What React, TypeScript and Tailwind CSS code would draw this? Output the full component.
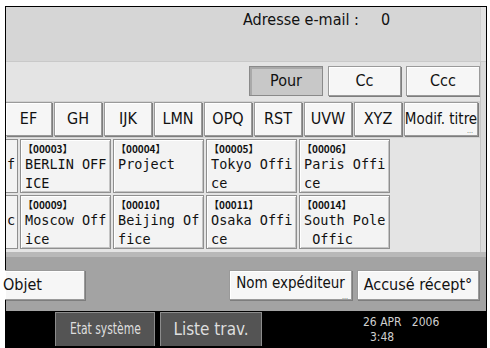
import React from "react";

const NARROW = "font-['Liberation_Sans_Narrow','DejaVu_Sans_Condensed',sans-serif]";
const MONO = "font-['DejaVu_Sans_Mono','Liberation_Mono',monospace]";

function WhiteBtn({ children, className = "" }: { children: React.ReactNode; className?: string }) {
  return (
    <div
      className={`flex items-center justify-center whitespace-nowrap bg-[#f6f6f6] border border-[#9a9a9a] shadow-[1px_1px_0_#7d7d7d,inset_1px_1px_0_#ffffff] text-[#111] ${className}`}
    >
      {children}
    </div>
  );
}

function Card({ id, l1, l2 }: { id: string; l1: string; l2: string }) {
  return (
    <div className="w-[91px] h-[54px] shrink-0 bg-[#f3f3f3] border border-[#8f8f8f] shadow-[inset_1px_1px_0_#ffffff,inset_-1px_-1px_0_#c4c4c4] px-[4px] pt-[3px] overflow-hidden">
      <div className="text-[10px] leading-[12px] font-bold text-[#111] font-['Noto_Sans_CJK_JP','DejaVu_Sans',sans-serif] whitespace-nowrap -ml-[2px]">
        【{id}】
      </div>
      <div className={`${MONO} text-[13.5px] leading-[19px] text-[#111] whitespace-pre`}>{l1}</div>
      <div className={`${MONO} text-[13.5px] leading-[19px] text-[#111] whitespace-pre`}>{l2}</div>
    </div>
  );
}

function PartialCard({ ch }: { ch: string }) {
  return (
    <div className="w-[12px] h-[54px] shrink-0 bg-[#f3f3f3] border border-l-0 border-[#8f8f8f] overflow-hidden pt-[15px]">
      <div className={`${MONO} text-[13.5px] leading-[19px] text-[#111] pl-[1px]`}>{ch}</div>
    </div>
  );
}

export default function App() {
  const letters = ["GH", "IJK", "LMN", "OPQ", "RST", "UVW", "XYZ"];
  return (
    <div className="w-[490px] h-[348px] bg-white pl-[5px] pt-[6px] overflow-hidden">
      <div className="w-[482px] h-[342px] border-l border-t border-r border-black flex flex-col bg-black">
        {/* header */}
        <div className="h-[54px] flex bg-[#d6d6d6] shrink-0">
          <div className={`flex-1 pl-[237px] pt-[2px] ${NARROW} text-[16px] leading-[22px] text-[#111] flex`}>
            <span>Adresse e-mail :</span>
            <span className="ml-[22px]">0</span>
          </div>
          <div className="w-[6px] bg-[#e2e2e2] border-l border-[#cfcfcf]" />
        </div>
        {/* middle area */}
        <div className="flex bg-[#e4e4e4] shrink-0 border-t border-[#c9c9c9]">
          <div className="flex-1 flex flex-col">
            <div className="h-[39px] flex justify-end items-start pt-[4px] gap-[5px]">
              <div className={`w-[74px] h-[30px] flex items-center justify-center bg-[#c8c8c8] border border-[#8a8a8a] shadow-[inset_2px_2px_0_#a9a9a9] ${NARROW} text-[16px] text-[#111]`}>
                Pour
              </div>
              <WhiteBtn className={`w-[73px] h-[30px] ${NARROW} text-[16px]`}>Cc</WhiteBtn>
              <WhiteBtn className={`w-[74px] h-[30px] ${NARROW} text-[16px]`}>Ccc</WhiteBtn>
            </div>
            <div className="h-[37px] flex gap-[2px] bg-[#d2d2d2] py-[1px]">
              <WhiteBtn className={`w-[46px] h-[34px] ${NARROW} text-[16px] border-l-0`}>EF</WhiteBtn>
              {letters.map((l) => (
                <WhiteBtn key={l} className={`w-[48px] h-[34px] ${NARROW} text-[16px]`}>
                  {l}
                </WhiteBtn>
              ))}
              <WhiteBtn className={`w-[74px] h-[34px] ${NARROW} text-[15px] relative flex-col`}>
                <span className="leading-[16px]">Modif. titre</span>
                <span className="absolute right-[4px] bottom-[1px] text-[7px] leading-[5px] text-[#666]">...</span>
              </WhiteBtn>
            </div>
            <div className="flex flex-col gap-[2px] pt-[1px] pb-[3px]">
              <div className="flex gap-[2px]">
                <PartialCard ch="f" />
                <Card id="00003" l1="BERLIN OFF" l2="ICE" />
                <Card id="00004" l1="Project" l2="" />
                <Card id="00005" l1="Tokyo Offi" l2="ce" />
                <Card id="00006" l1="Paris Offi" l2="ce" />
              </div>
              <div className="flex gap-[2px]">
                <PartialCard ch="c" />
                <Card id="00009" l1="Moscow Off" l2="ice" />
                <Card id="00010" l1="Beijing Of" l2="fice" />
                <Card id="00011" l1="Osaka Offi" l2="ce" />
                <Card id="00014" l1="South Pole" l2=" Offic" />
              </div>
            </div>
          </div>
          <div className="w-[6px] bg-[#dadada] border-l border-[#c4c4c4]" />
        </div>
        {/* bottom band */}
        <div className="h-[59px] shrink-0 bg-[#a3a3a3] border-t-[5px] border-[#b8b8b8] flex items-start pt-[13px] pr-[7px]">
          <WhiteBtn className={`w-[80px] h-[30px] ${NARROW} text-[16px] justify-start border-l-0 -ml-[1px]`}>
            <span className="-ml-[2px]">Objet</span>
          </WhiteBtn>
          <div className="flex-1" />
          <WhiteBtn className={`w-[123px] h-[30px] ${NARROW} text-[15px] relative items-start pt-[4px]`}>
            <span className="leading-[17px]">Nom expéditeur</span>
            <span className="absolute right-[3px] bottom-[0px] text-[7px] leading-[4px] text-[#666]">...</span>
          </WhiteBtn>
          <WhiteBtn className={`w-[122px] h-[30px] ml-[5px] ${NARROW} text-[16px]`}>Accusé récept°</WhiteBtn>
        </div>
        {/* status bar */}
        <div className="flex-1 bg-black flex items-start pt-[1px]">
          <div className="w-[49px]" />
          <div className={`w-[100px] h-[34px] bg-[#545454] border border-[#8c8c8c] border-b-0 flex items-center justify-center text-[#dedede] ${NARROW} text-[15px] whitespace-nowrap`}>
            <span className="inline-block scale-x-[0.8]">Etat système</span>
          </div>
          <div className={`w-[102px] h-[34px] ml-[5px] bg-[#545454] border border-[#8c8c8c] border-b-0 flex items-center justify-center text-[#dedede] font-['DejaVu_Sans_Condensed','DejaVu_Sans',sans-serif] text-[17px] whitespace-nowrap`}>
            Liste trav.
          </div>
          <div className={`ml-[101px] pt-[3px] ${NARROW} text-[#cfcfcf] text-[12px] leading-[15px]`}>
            <div className="whitespace-pre">26 APR   2006</div>
            <div className="pl-[7px]">3:48</div>
          </div>
        </div>
      </div>
    </div>
  );
}
